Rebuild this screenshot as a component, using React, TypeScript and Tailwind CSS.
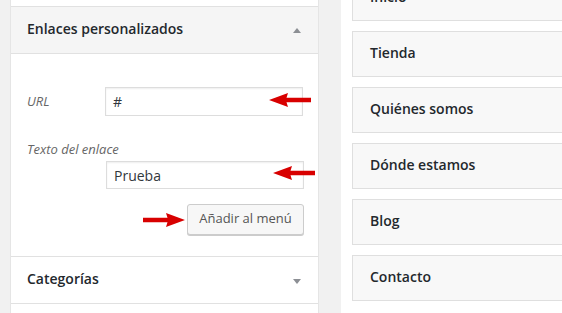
import React from "react";

function LeftArrow({ className }: { className: string }) {
  return (
    <svg className={className} width="44" height="16" viewBox="0 0 44 16">
      <path d="M1 8 L20 1 L18.5 5.8 L43 5.8 L43 10.2 L18.5 10.2 L20 15 Z" fill="#d80000" />
    </svg>
  );
}

function RightArrow({ className }: { className: string }) {
  return (
    <svg className={className} width="44" height="16" viewBox="0 0 44 16">
      <path d="M43 8 L24 1 L25.5 5.8 L1 5.8 L1 10.2 L25.5 10.2 L24 15 Z" fill="#d80000" />
    </svg>
  );
}

const menuItems = ["Inicio", "Tienda", "Quiénes somos", "Dónde estamos", "Blog", "Contacto"];

export default function App() {
  return (
    <div
      className="relative w-[562px] h-[313px] overflow-hidden bg-[#f1f1f1] flex text-[#23282d]"
      style={{ fontFamily: '"Open Sans", "Noto Sans", sans-serif' }}
    >
      {/* Left column */}
      <div className="w-[319px] pl-[10px] shrink-0">
        <div className="h-full bg-white border-x border-[#e5e5e5] flex flex-col">
          <div className="h-[6px] shrink-0" />
          <div className="h-[48px] shrink-0 bg-[#f5f5f5] border-y border-[#e1e1e1] flex items-center justify-between pl-[16px] pr-[17px] pb-[3px]">
            <span className="text-[14px] font-semibold">Enlaces personalizados</span>
            <span className="w-0 h-0 border-x-[4px] border-x-transparent border-b-[5px] border-b-[#8c8f94] mt-[4px]" />
          </div>
          <div className="h-[202px] shrink-0 flex flex-col pl-[16px] pr-[14px] pt-[33px]">
            <div className="flex items-center">
              <span className="w-[78px] text-[13px] italic text-[#666]">URL</span>
              <div className="w-[198px] h-[29px] border border-[#ddd] shadow-[inset_0_1px_2px_rgba(0,0,0,0.07)] flex items-center pl-[7px] text-[14px] text-[#32373c]">
                #
              </div>
            </div>
            <div className="mt-[24px] text-[13px] italic text-[#666] leading-[18px]">Texto del enlace</div>
            <div className="flex justify-end mt-[3px]">
              <div className="w-[198px] h-[28px] border border-[#ddd] shadow-[inset_0_1px_2px_rgba(0,0,0,0.07)] flex items-center pl-[7px] text-[14px] text-[#32373c]">
                Prueba
              </div>
            </div>
            <div className="flex justify-end mt-[15px]">
              <div className="w-[117px] h-[31px] border border-[#ccc] bg-[#f7f7f7] rounded-[3px] shadow-[0_1px_0_#ccc] flex items-center justify-center text-[13px] text-[#555] pb-[1px]">
                Añadir al menú
              </div>
            </div>
          </div>
          <div className="h-[48px] shrink-0 border-y border-[#e1e1e1] flex items-center justify-between pl-[16px] pr-[17px] pb-[3px]">
            <span className="text-[14px] font-semibold">Categorías</span>
            <span className="w-0 h-0 border-x-[4px] border-x-transparent border-t-[5px] border-t-[#8c8f94] mt-[5px]" />
          </div>
        </div>
      </div>

      {/* Right column */}
      <div className="ml-[22px] flex-1 bg-white pl-[11px]">
        <div className="-mt-[25px] flex flex-col gap-[10px]">
          {menuItems.map((item) => (
            <div
              key={item}
              className="w-[260px] h-[46px] border border-[#dfdfdf] bg-[#f8f8f8] flex items-center pl-[17px] pb-[3px] text-[14px] font-semibold"
            >
              {item}
            </div>
          ))}
        </div>
      </div>

      {/* Annotation arrows */}
      <LeftArrow className="absolute left-[268px] top-[92px]" />
      <LeftArrow className="absolute left-[272px] top-[165px]" />
      <RightArrow className="absolute left-[142px] top-[212px]" />
    </div>
  );
}
